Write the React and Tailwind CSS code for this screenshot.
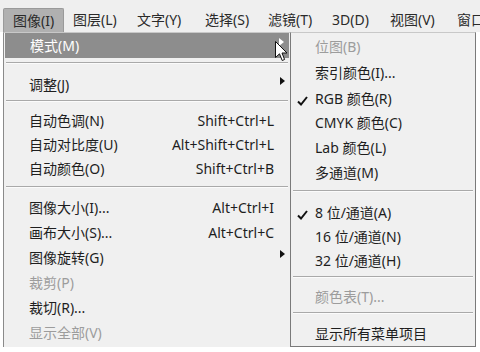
import React from "react";

const FONT = { fontFamily: '"Noto Sans", "Noto Sans CJK SC", sans-serif' };

function Row({ h, label, shortcut, disabled, arrow, active }) {
  return (
    <div
      className={`relative flex items-center pl-[25px] pr-[16px] ${h} ${
        active ? "bg-[#8d8d8d] text-white mx-[1px]" : disabled ? "text-[#9c9c9c]" : "text-[#1e1e1e]"
      }`}
    >
      <span className="flex-1">{label}</span>
      {shortcut && <span>{shortcut}</span>}
      {arrow && (
        <svg width="5" height="8" viewBox="0 0 5 8" className="absolute right-[5px] top-[calc(50%-8px)]">
          <path d="M0 0 L5 4 L0 8 Z" fill={active ? "#fff" : "#111"} />
        </svg>
      )}
    </div>
  );
}

function Sep({ h, off }) {
  return (
    <div className={`flex flex-col ${h}`}>
      <div className={`${off} mx-[2px] h-[1px] bg-[#a9a9a9]`} />
      <div className="mx-[2px] h-[1px] bg-[#fbfbfb]" />
    </div>
  );
}

function SubRow({ h, label, disabled, checked }) {
  return (
    <div className={`relative flex items-center pl-[24px] ${h} ${disabled ? "text-[#9c9c9c]" : "text-[#1e1e1e]"}`}>
      {checked && (
        <svg width="11" height="10" viewBox="0 0 11 10" className="absolute left-[6px] top-[calc(50%-3px)]">
          <path d="M1 5.5 L4 8.5 L10 1" stroke="#111" strokeWidth="2" fill="none" />
        </svg>
      )}
      <span>{label}</span>
    </div>
  );
}

export default function App() {
  const bar = [
    ["图像(I)", "w-[61px]"],
    ["图层(L)", "w-[64px]"],
    ["文字(Y)", "w-[68px]"],
    ["选择(S)", "w-[63px]"],
    ["滤镜(T)", "w-[64px]"],
    ["3D(D)", "w-[58px]"],
    ["视图(V)", "w-[67px]"],
    ["窗口(W)", "w-[70px]"],
  ];
  return (
    <div className="w-[480px] h-[352px] bg-white overflow-hidden relative text-[14px] leading-none" style={FONT}>
      {/* menu bar */}
      <div className="h-[32px] bg-[#efefef] flex items-end pl-[3px] pr-[3px] overflow-hidden whitespace-nowrap">
        {bar.map(([t, w], i) => (
          <div
            key={t}
            className={`${w} shrink-0 h-[24px] flex items-center pl-[9px] text-[#2a2a2a] ${
              i === 0 ? "bg-[#b0b0b0] rounded-t-[2px] border border-[#9a9a9a] border-b-0 pl-[8px]" : ""
            }`}
          >
            {t}
          </div>
        ))}
      </div>
      <div className="flex">
        {/* main menu */}
        <div className="ml-[3px] w-[287px] h-[315px] bg-[#f0f0f0] border-l border-[#8a8a8a] border-t border-t-[#c8c8c8] relative">
          <Row h="h-[25px]" label="模式(M)" active arrow />
          <Sep h="h-[15px]" off="mt-[4px]" />
          <Row h="h-[24px]" label="调整(J)" arrow />
          <Sep h="h-[12px]" off="mt-[3px]" />
          <Row h="h-[24px]" label="自动色调(N)" shortcut="Shift+Ctrl+L" />
          <Row h="h-[24px]" label="自动对比度(U)" shortcut="Alt+Shift+Ctrl+L" />
          <Row h="h-[24px]" label="自动颜色(O)" shortcut="Shift+Ctrl+B" />
          <Sep h="h-[14px]" off="mt-[5px]" />
          <Row h="h-[25px]" label="图像大小(I)..." shortcut="Alt+Ctrl+I" />
          <Row h="h-[25px]" label="画布大小(S)..." shortcut="Alt+Ctrl+C" />
          <Row h="h-[25px]" label="图像旋转(G)" arrow />
          <Row h="h-[25px]" label="裁剪(P)" disabled />
          <Row h="h-[25px]" label="裁切(R)..." />
          <Row h="h-[25px]" label="显示全部(V)" disabled />
        </div>
        {/* submenu */}
        <div className="w-[186px] h-[315px] bg-[#f0f0f0] border-x border-b border-[#7a7a7a] border-t border-t-[#c8c8c8]">
          <SubRow h="h-[27px]" label="位图(B)" disabled />
          <SubRow h="h-[26px]" label="索引颜色(I)..." />
          <SubRow h="h-[25px]" label="RGB 颜色(R)" checked />
          <SubRow h="h-[24px]" label="CMYK 颜色(C)" />
          <SubRow h="h-[25px]" label="Lab 颜色(L)" />
          <SubRow h="h-[25px]" label="多通道(M)" />
          <Sep h="h-[15px]" off="mt-[5px]" />
          <SubRow h="h-[25px]" label="8 位/通道(A)" checked />
          <SubRow h="h-[24px]" label="16 位/通道(N)" />
          <SubRow h="h-[24px]" label="32 位/通道(H)" />
          <Sep h="h-[11px]" off="mt-[3px]" />
          <SubRow h="h-[25px]" label="颜色表(T)..." disabled />
          <Sep h="h-[13px]" off="mt-[3px]" />
          <SubRow h="h-[24px]" label="显示所有菜单项目" />
        </div>
      </div>
      {/* mouse cursor */}
      <svg width="13" height="21" viewBox="0 0 13 21" className="absolute left-[275px] top-[41px]">
        <path d="M0.5 0.5 L0.5 16.5 L4.5 12.8 L7.2 19.5 L9.6 18.5 L7 12 L12 12 Z" fill="#fff" stroke="#111" strokeWidth="1" strokeLinejoin="round" />
      </svg>
    </div>
  );
}
